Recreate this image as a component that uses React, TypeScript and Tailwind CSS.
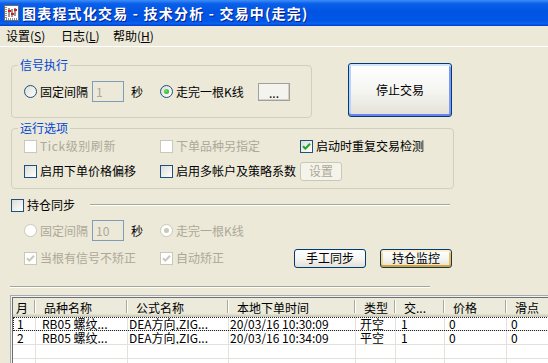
import React from "react";

const DIS = "text-[#ACA899]";

function Radio({ checked = false, disabled = false }: { checked?: boolean; disabled?: boolean }) {
  return (
    <span
      className={`flex h-[13px] w-[13px] shrink-0 items-center justify-center rounded-full border ${
        disabled ? "border-[#CAC8BB] bg-white" : "border-[#1C5180] bg-[linear-gradient(135deg,#DCDCD7,#FFFFFF)]"
      }`}
    >
      {checked && (
        <span
          className={`h-[5px] w-[5px] rounded-full ${
            disabled ? "bg-[#CAC8BB]" : "bg-[radial-gradient(circle_at_40%_40%,#6CE068,#21A121)]"
          }`}
        />
      )}
    </span>
  );
}

function Check({ checked = false, disabled = false }: { checked?: boolean; disabled?: boolean }) {
  return (
    <span
      className={`flex h-[13px] w-[13px] shrink-0 items-center justify-center border ${
        disabled ? "border-[#CAC8BB] bg-white" : "border-[#1C5180] bg-[linear-gradient(135deg,#DCDCD7,#FFFFFF)]"
      }`}
    >
      {checked && (
        <svg width="9" height="9" viewBox="0 0 9 9">
          <path
            d="M1 4.2 L3.4 6.6 L8 1.8"
            fill="none"
            stroke={disabled ? "#CAC8BB" : "#21A121"}
            strokeWidth="2"
          />
        </svg>
      )}
    </span>
  );
}

function Field({ children }: { children: React.ReactNode }) {
  return (
    <span className={`flex h-[21px] w-[32px] shrink-0 items-center border border-[#7F9DB9] bg-[#ECE9D8] pl-[3px] ${DIS}`}>
      {children}
    </span>
  );
}

const btnBase =
  "flex shrink-0 items-center justify-center rounded-[3px] border border-[#003C74] bg-[linear-gradient(to_bottom,#FFFFFF,#F4F4F0_55%,#E3E0D6)]";

function AppIcon() {
  return (
    <svg width="15" height="16" viewBox="0 0 15 16">
      <rect x="0.5" y="0.5" width="14" height="15" fill="#fff" stroke="#6b6b6b" />
      <path d="M2 2 V14 H13" fill="none" stroke="#222" strokeDasharray="1 1" />
      <path d="M5 3 V12 M8 4 V12 M11 3 V11" stroke="#333" />
      <rect x="4" y="5" width="3" height="2" fill="#E01818" />
      <rect x="7" y="8" width="3" height="2" fill="#E01818" />
      <rect x="10" y="4" width="3" height="2" fill="#E01818" />
    </svg>
  );
}

const cols = [23, 92, 101, 127, 40, 49, 62, 90];
const heads = ["月", "品种名称", "公式名称", "本地下单时间", "类型", "交...", "价格", "滑点"];
const pads = ["pl-[4px]", "pl-[6px]", "pl-[1px]", "pl-[1px]", "pl-[4px]", "pl-[5px]", "pl-[4px]", "pl-[4px]"];
const rows = [
  ["1", "RB05 螺纹...", "DEA方向,ZIG...", "20/03/16 10:30:09", "开空", "1", "0", "0"],
  ["2", "RB05 螺纹...", "DEA方向,ZIG...", "20/03/16 10:34:09", "平空", "1", "0", "0"],
  ["", "", "", "", "", "", "", ""],
  ["", "", "", "", "", "", "", ""],
];

export default function App() {
  return (
    <div className="flex h-[363px] w-[548px] flex-col overflow-hidden bg-[#ECE9D8] text-[12px] leading-[14px] text-black [font-family:'Noto_Sans_CJK_SC','Noto_Sans',sans-serif]">
      {/* Title bar */}
      <div className="flex h-[26px] shrink-0 items-center bg-[linear-gradient(to_bottom,#3D8EF7_0%,#0A60E9_14%,#0054E3_45%,#0056E6_80%,#0A62F0_90%,#003FCB_100%)] pl-[4px]">
        <AppIcon />
        <span className="ml-[3px] whitespace-pre text-[14px] font-bold tracking-[1.2px] text-white [text-shadow:1px_1px_0_#0A1E8C]">
          图表程式化交易 - 技术分析 - 交易中(走完)
        </span>
      </div>

      {/* Menu */}
      <div className="flex h-[21px] shrink-0 items-center border-b border-white pl-[6px]">
        <span className="w-[55px]">
          设置(<span className="underline">S</span>)
        </span>
        <span className="w-[52px]">
          日志(<span className="underline">L</span>)
        </span>
        <span>
          帮助(<span className="underline">H</span>)
        </span>
      </div>

      {/* 信号执行 + 停止交易 */}
      <div className="mt-[11px] flex shrink-0 items-start pl-[11px]">
        <fieldset className="h-[60px] w-[301px] rounded-[4px] border border-[#D0D0BF]">
          <legend className="ml-[6px] px-[2px] leading-[14px] text-[#0046D5]">信号执行</legend>
          <div className="mt-[9px] flex h-[21px] items-center pl-[12px]">
            <div className="flex w-[68px] items-center">
              <Radio />
              <span className="ml-[3px]">固定间隔</span>
            </div>
            <div className="flex w-[68px] items-center">
              <Field>1</Field>
              <span className="ml-[7px]">秒</span>
            </div>
            <div className="flex w-[98px] items-center">
              <Radio checked />
              <span className="ml-[3px]">走完一根K线</span>
            </div>
            <button className="flex h-[18px] w-[32px] items-end justify-center border border-[#A0A0A0] bg-[#F4F3EE] pb-[3px] leading-[8px] shadow-[inset_-1px_-1px_0_#D4D0C8]">
              ...
            </button>
          </div>
        </fieldset>
        <button
          className={`${btnBase} ml-[36px] mt-[5px] h-[54px] w-[104px] shadow-[inset_0_2px_0_#CEE7FF,inset_0_-2px_0_#6982EE,inset_2px_0_0_#B9D1FA,inset_-2px_0_0_#7D99F1]`}
        >
          停止交易
        </button>
      </div>

      {/* 运行选项 */}
      <fieldset className="ml-[11px] mt-[3px] h-[68px] w-[443px] shrink-0 rounded-[4px] border border-[#D0D0BF]">
        <legend className="ml-[6px] px-[2px] leading-[14px] text-[#0046D5]">运行选项</legend>
        <div className="mt-[1px] flex h-[20px] items-center pl-[12px]">
          <div className="flex w-[136px] items-center gap-[3px]">
            <Check disabled />
            <span className={`${DIS} tracking-[0.6px]`}>Tick级别刷新</span>
          </div>
          <div className="flex w-[140px] items-center gap-[3px]">
            <Check disabled />
            <span className={DIS}>下单品种另指定</span>
          </div>
          <div className="flex items-center gap-[3px]">
            <Check checked />
            <span>启动时重复交易检测</span>
          </div>
        </div>
        <div className="mt-[5px] flex h-[20px] items-center pl-[12px]">
          <div className="flex w-[136px] items-center gap-[3px]">
            <Check />
            <span>启用下单价格偏移</span>
          </div>
          <div className="flex w-[140px] items-center gap-[3px]">
            <Check />
            <span>启用多帐户及策略系数</span>
          </div>
          <button className="flex h-[19px] w-[42px] items-center justify-center rounded-[3px] border border-[#C9C7BA] bg-[#F5F4EA] text-[#ACA899]">
            设置
          </button>
        </div>
      </fieldset>

      {/* 持仓同步 */}
      <div className="ml-[11px] mt-[8px] flex h-[16px] shrink-0 items-center">
        <Check />
        <span className="ml-[3px] w-[48px]">持仓同步</span>
        <span className="ml-[15px] h-[2px] w-[360px] border-t border-b border-t-[#A6A59A] border-b-white" />
      </div>

      <div className="mt-[7px] flex h-[21px] shrink-0 items-center pl-[24px]">
        <div className="flex w-[68px] items-center">
          <Radio disabled />
          <span className={`ml-[3px] ${DIS}`}>固定间隔</span>
        </div>
        <div className="flex w-[68px] items-center">
          <Field>10</Field>
          <span className="ml-[7px]">秒</span>
        </div>
        <div className="flex items-center">
          <Radio checked disabled />
          <span className={`ml-[3px] ${DIS}`}>走完一根K线</span>
        </div>
      </div>

      <div className="mt-[7px] flex h-[20px] shrink-0 items-center pl-[24px]">
        <div className="flex w-[136px] items-center gap-[3px]">
          <Check checked disabled />
          <span className={DIS}>当根有信号不矫正</span>
        </div>
        <div className="flex w-[134px] items-center gap-[3px]">
          <Check checked disabled />
          <span className={DIS}>自动矫正</span>
        </div>
        <button className={`${btnBase} h-[19px] w-[72px]`}>手工同步</button>
        <button
          className={`${btnBase} ml-[14px] h-[19px] w-[72px] shadow-[inset_0_2px_0_#FFF0CF,inset_0_-2px_0_#E5A01A,inset_2px_0_0_#FBD785,inset_-2px_0_0_#F5BA4F]`}
        >
          持仓监控
        </button>
      </div>

      {/* separator */}
      <div className="ml-[10px] mt-[18px] h-[2px] w-[420px] shrink-0 border-t border-b border-t-[#A6A59A] border-b-white" />

      {/* list */}
      <div className="ml-[10px] mt-[7px] w-[600px] flex-1 border border-[#A5A9AE] bg-[#F2F2F2] p-[1px]">
        <div className="h-full border border-[#6E6E6E] bg-white">
          <div className="flex h-[19px] bg-[#EBEADB] shadow-[inset_0_-1px_0_#CBC7B8,inset_0_-2px_0_#D6D2C2,inset_0_-3px_0_#E2DECD]">
            {heads.map((h, i) => (
              <div key={i} className="flex shrink-0 items-center" style={{ width: cols[i] }}>
                <span className={`flex-1 overflow-hidden whitespace-nowrap ${i === 0 ? "pl-[3px]" : "pl-[8px]"}`}>{h}</span>
                <span className="mb-[3px] h-[13px] w-[1px] bg-[#ACA899]" />
                <span className="mb-[3px] h-[13px] w-[1px] bg-white" />
              </div>
            ))}
          </div>
          {rows.map((r, ri) => (
            <div
              key={ri}
              className={`flex h-[14px] border-b border-[#E2E1DB] ${
                ri === 0 ? "outline-1 -outline-offset-1 outline-dotted outline-[#222]" : ""
              }`}
            >
              {r.map((c, ci) => (
                <div
                  key={ci}
                  className={`shrink-0 overflow-hidden whitespace-nowrap border-r border-[#E2E1DB] leading-[13px] ${pads[ci]}`}
                  style={{ width: cols[ci] }}
                >
                  {c}
                </div>
              ))}
            </div>
          ))}
        </div>
      </div>
    </div>
  );
}
